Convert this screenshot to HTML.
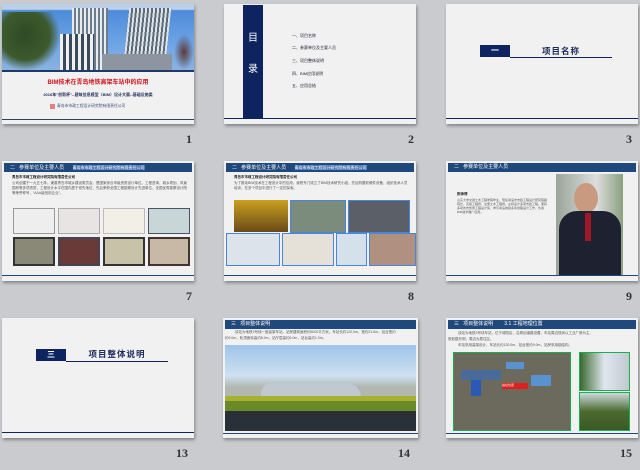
<!DOCTYPE html>
<html><head><meta charset="utf-8"><style>
*{margin:0;padding:0;box-sizing:border-box}
body{width:640px;height:470px;background:#c9cbce;position:relative;overflow:hidden;font-family:"Liberation Sans","Noto Sans CJK SC",sans-serif}
.s{position:absolute;width:192px;height:120px;background:#f1f1f2;box-shadow:1px 2px 3px rgba(0,0,0,.35);overflow:hidden}
.a{position:absolute}
.n{position:absolute;font-family:"Liberation Serif",serif;font-weight:bold;font-size:12px;color:#333;text-align:right;width:30px}
.hd{position:absolute;left:2px;right:2px;top:2px;height:9px;background:#1f497d;color:#fff;font-size:5px;line-height:9px;padding-left:6px;white-space:nowrap}
.bl{position:absolute;left:0;right:0;height:1px;background:#1f3a68}
.t{position:absolute;font-size:3.5px;color:#555;line-height:5px;white-space:nowrap;overflow:hidden}
.sec{position:absolute;background:#0e2460;color:#fff;font-size:8px;text-align:center;font-weight:bold}
</style></head><body>

<!-- Slide 1 -->
<div class="s" style="left:2px;top:4px">
 <div class="a" style="left:0;top:0;width:192px;height:66px;background:linear-gradient(180deg,#bcd0e8 0,#bcd0e8 8%,#4d8bd8 10%,#6ea4e6 60%,#8ab2de 100%)"></div>
 <div class="a" style="left:0;top:8px;width:58px;height:58px;background:radial-gradient(ellipse at 40% 40%,#2e4a26 0,#3d5a2e 50%,transparent 72%)"></div>
 <div class="a" style="left:70px;top:4px;width:36px;height:62px;background:repeating-linear-gradient(90deg,#e8ecef 0,#e8ecef 2px,#6b7c8c 2px,#6b7c8c 4px)"></div>
 <div class="a" style="left:124px;top:4px;width:42px;height:62px;background:repeating-linear-gradient(90deg,#dfe4e8 0,#dfe4e8 2px,#5c6b79 2px,#5c6b79 4px);transform:skewX(-6deg)"></div>
 <div class="a" style="left:58px;top:30px;width:34px;height:36px;background:repeating-linear-gradient(90deg,#f0f0f0 0,#f0f0f0 3px,#3a4a5a 3px,#3a4a5a 6px)"></div>
 <div class="a" style="left:100px;top:50px;width:70px;height:16px;background:#8c95a0"></div>
 <div class="a" style="left:172px;top:30px;width:20px;height:36px;background:radial-gradient(#5a3a3a,transparent 70%)"></div>
 <div class="a" style="left:0;top:66px;width:192px;height:2px;background:#1f3a68"></div>
 <div class="a" style="left:0;top:73px;width:192px;text-align:center;font-size:6px;color:#d0121b;font-weight:bold">BIM技术在青岛地铁高架车站中的应用</div>
 <div class="a" style="left:0;top:88px;width:192px;text-align:center;font-size:4px;color:#1a2a5a;font-weight:bold">2016年"创新杯"--建筑信息模型（BIM）设计大赛--基础设施类</div>
 <div class="a" style="left:48px;top:100px;width:5px;height:5px;background:#e08080"></div>
 <div class="a" style="left:55px;top:100px;font-size:3.8px;color:#3a4a7a">青岛市市政工程设计研究院有限责任公司</div>
 <div class="a" style="left:0;top:115px;width:192px;height:1px;background:#244a5a"></div>
</div>
<div class="n" style="left:162px;top:132px">1</div>

<!-- Slide 2 -->
<div class="s" style="left:224px;top:4px">
 <div class="a" style="left:19px;top:1px;width:20px;height:113px;background:#0e2460;color:#fff;font-size:10px;text-align:center;line-height:31px;padding-top:18px">目<br>录</div>
 <div class="t" style="left:68px;top:29px;color:#223;font-size:4px">一、项目名称</div>
 <div class="t" style="left:68px;top:41px;color:#223;font-size:4px">二、参赛单位及主要人员</div>
 <div class="t" style="left:68px;top:54px;color:#223;font-size:4px">三、项目整体说明</div>
 <div class="t" style="left:68px;top:67px;color:#223;font-size:4px">四、BIM应用说明</div>
 <div class="t" style="left:68px;top:79px;color:#223;font-size:4px">五、应用总结</div>
 <div class="bl" style="top:114px;height:1px;background:#0e2460"></div>
</div>
<div class="n" style="left:384px;top:132px">2</div>

<!-- Slide 3 -->
<div class="s" style="left:446px;top:4px">
 <div class="sec" style="left:34px;top:41px;width:30px;height:12px;line-height:12px">一</div>
 <div class="a" style="left:64px;top:53px;width:102px;height:1px;background:#0e2460"></div>
 <div class="a" style="left:64px;top:41px;width:102px;text-align:center;font-size:8.5px;font-weight:bold;color:#1a2a5a;letter-spacing:1px">项目名称</div>
 <div class="bl" style="top:114px;background:#0e2460"></div>
</div>
<div class="n" style="left:602px;top:132px">3</div>

<!-- Slide 7 -->
<div class="s" style="left:2px;top:161px">
 <div class="hd">二&nbsp;&nbsp;&nbsp;参赛单位及主要人员&nbsp;&nbsp;&nbsp;&nbsp;&nbsp;&nbsp;<span style="background:#4a78b8;font-size:4px">青岛市市政工程设计研究院有限责任公司</span></div>
 <div class="t" style="left:10px;top:14px;color:#111;font-weight:bold">青岛市市政工程设计研究院有限责任公司</div>
 <div class="t" style="left:10px;top:20px;width:176px;white-space:normal;height:25px">公司创建于一九五七年，隶属青岛市城乡建设委员会，是国家综合甲级资质设计单位。工程咨询、城乡规划、风景园林等多项资质，工程设计水平在国内居于领先地位，先后荣获全国工程勘察设计先进单位、全国优秀勘察设计院等荣誉称号，“AAA级信用企业”。</div>
 <div class="a" style="left:11px;top:47px;width:42px;height:26px;background:#eee;border:1px solid #999"></div>
 <div class="a" style="left:56px;top:47px;width:42px;height:26px;background:#e8e4e4;border:1px solid #aaa"></div>
 <div class="a" style="left:101px;top:47px;width:42px;height:26px;background:#f2efe6;border:1px solid #bbb"></div>
 <div class="a" style="left:146px;top:47px;width:42px;height:26px;background:#c9d6d8;border:1px solid #456"></div>
 <div class="a" style="left:11px;top:76px;width:42px;height:29px;background:#8a8876;border:2px solid #333"></div>
 <div class="a" style="left:56px;top:76px;width:42px;height:29px;background:#6a3a38;border:2px solid #445"></div>
 <div class="a" style="left:101px;top:76px;width:42px;height:29px;background:#c8c2a8;border:2px solid #333"></div>
 <div class="a" style="left:146px;top:76px;width:42px;height:29px;background:#c8b8a6;border:2px solid #433"></div>
 <div class="bl" style="top:114px;height:1px;background:#1f497d"></div>
</div>
<div class="n" style="left:162px;top:289px">7</div>

<!-- Slide 8 -->
<div class="s" style="left:224px;top:161px">
 <div class="hd">二&nbsp;&nbsp;&nbsp;参赛单位及主要人员&nbsp;&nbsp;&nbsp;&nbsp;&nbsp;&nbsp;<span style="background:#4a78b8;font-size:4px">青岛市市政工程设计研究院有限责任公司</span></div>
 <div class="t" style="left:10px;top:14px;color:#111;font-weight:bold">青岛市市政工程设计研究院有限责任公司</div>
 <div class="t" style="left:10px;top:20px;width:176px;white-space:normal;height:15px">为了推动BIM技术在工程设计中的应用，我院专门成立了BIM技术研究小组，先后购置软硬件设备，组织技术人员培训，在多个项目中进行了一定的探索。</div>
 <div class="a" style="left:10px;top:39px;width:54px;height:32px;background:linear-gradient(#c9a020,#6a4a18)"></div>
 <div class="a" style="left:66px;top:39px;width:56px;height:33px;background:#7b8c7c;border:1px solid #4a86d8"></div>
 <div class="a" style="left:124px;top:39px;width:62px;height:33px;background:#5a5f68;border:1px solid #4a86d8"></div>
 <div class="a" style="left:2px;top:72px;width:54px;height:33px;background:#dde3ea;border:1px solid #4a86d8"></div>
 <div class="a" style="left:58px;top:72px;width:52px;height:33px;background:#e6e1d8;border:1px solid #4a86d8"></div>
 <div class="a" style="left:112px;top:72px;width:31px;height:33px;background:#d4e0ea;border:1px solid #4a86d8"></div>
 <div class="a" style="left:145px;top:72px;width:47px;height:33px;background:#b09080;border:1px solid #4a86d8"></div>
 <div class="bl" style="top:114px;background:#1f497d"></div>
</div>
<div class="n" style="left:384px;top:289px">8</div>

<!-- Slide 9 -->
<div class="s" style="left:446px;top:161px">
 <div class="hd">二&nbsp;&nbsp;&nbsp;参赛单位及主要人员</div>
 <div class="t" style="left:11px;top:31px;color:#111;font-weight:bold">陈师傅</div>
 <div class="t" style="left:11px;top:37px;width:90px;white-space:normal;height:42px;font-size:3px;line-height:4px">山东大学交通土木工程学院毕业，现任青岛市市政工程设计研究院副院长，高级工程师，注册土木工程师。主持设计多项市政工程，荣获多项省市优秀工程设计奖，参与青岛地铁多条线路设计工作，负责BIM技术推广应用。</div>
 <div class="a" style="left:110px;top:13px;width:67px;height:102px;background:linear-gradient(90deg,#9aa59a,#ddd 60%,#8aa080)"></div>
 <div class="a" style="left:128px;top:22px;width:24px;height:30px;border-radius:50%;background:#c99a80"></div>
 <div class="a" style="left:113px;top:50px;width:62px;height:65px;border-radius:18px 18px 0 0;background:#1e2230"></div>
 <div class="a" style="left:139px;top:52px;width:6px;height:28px;background:#a01828"></div>
 <div class="bl" style="top:114px;background:#1f497d"></div>
</div>
<div class="n" style="left:602px;top:289px">9</div>

<!-- Slide 13 -->
<div class="s" style="left:2px;top:318px">
 <div class="sec" style="left:34px;top:31px;width:30px;height:12px;line-height:12px">三</div>
 <div class="a" style="left:64px;top:43px;width:102px;height:1px;background:#0e2460"></div>
 <div class="a" style="left:64px;top:30px;width:102px;text-align:center;font-size:8.5px;font-weight:bold;color:#1a2a5a;letter-spacing:1px">项目整体说明</div>
 <div class="bl" style="top:114px;background:#0e2460"></div>
</div>
<div class="n" style="left:158px;top:446px">13</div>

<!-- Slide 14 -->
<div class="s" style="left:223px;top:318px;width:195px">
 <div class="hd">三&nbsp;&nbsp;&nbsp;项目整体说明</div>
 <div class="t" style="left:12px;top:12px">该站为地铁3号线一座高架车站，站房建筑面积约6000平方米，车站长约120.0m，宽约21.6m，站台宽约</div>
 <div class="t" style="left:2px;top:18px">约9.0m，轨顶面标高约8.0m，站厅层高约6.0m，站台高约1.0m。</div>
 <div class="a" style="left:2px;top:27px;width:191px;height:56px;background:linear-gradient(#9ec4ea,#cfe0f0 55%,#b0b8b0 75%)"></div>
 <div class="a" style="left:38px;top:65px;width:100px;height:14px;background:#c0c8d0;border-radius:30px 40px 0 0"></div>
 <div class="a" style="left:2px;top:78px;width:191px;height:10px;background:#a8b030"></div>
 <div class="a" style="left:2px;top:83px;width:191px;height:10px;background:#6a8a28"></div>
 <div class="a" style="left:2px;top:93px;width:191px;height:20px;background:#2a3038"></div>
 <div class="bl" style="top:115px;background:#1f497d"></div>
</div>
<div class="n" style="left:380px;top:446px">14</div>

<!-- Slide 15 -->
<div class="s" style="left:446px;top:318px">
 <div class="hd">三&nbsp;&nbsp;&nbsp;项目整体说明&nbsp;&nbsp;&nbsp;&nbsp;&nbsp;&nbsp;&nbsp;&nbsp;3.1&nbsp;工程地理位置</div>
 <div class="t" style="left:12px;top:13px">该站为地铁3号线车站，位于城阳区，沿规划道路设置，车站周边现状以工业厂房为主，</div>
 <div class="t" style="left:2px;top:19px">规划路东侧，周边为居住区。</div>
 <div class="t" style="left:12px;top:25px">车站采用高架设计，车站长约120.0m，站台宽约9.0m，站房采用钢结构。</div>
 <div class="a" style="left:7px;top:34px;width:118px;height:79px;background:#6b6a5c;border:1px solid #16b050"></div>
 <div class="a" style="left:15px;top:52px;width:40px;height:10px;background:#4a6a9a"></div>
 <div class="a" style="left:25px;top:62px;width:10px;height:16px;background:#2a5ab8"></div>
 <div class="a" style="left:56px;top:65px;width:26px;height:6px;background:#e02020;font-size:3px;color:#fff">站址位置</div>
 <div class="a" style="left:60px;top:44px;width:18px;height:7px;background:#5a92d0"></div>
 <div class="a" style="left:85px;top:57px;width:20px;height:11px;background:#5a92d0"></div>
 <div class="a" style="left:133px;top:34px;width:51px;height:39px;background:linear-gradient(90deg,#3a6a30,#e0e6ee 50%,#c0c8d0);border:1px solid #16b050"></div>
 <div class="a" style="left:133px;top:74px;width:51px;height:39px;background:linear-gradient(#cfd8dc,#4a6a30 50%,#3a5a24);border:1px solid #16b050"></div>
 <div class="bl" style="top:115px;background:#1f497d"></div>
</div>
<div class="n" style="left:602px;top:446px">15</div>

</body></html>
